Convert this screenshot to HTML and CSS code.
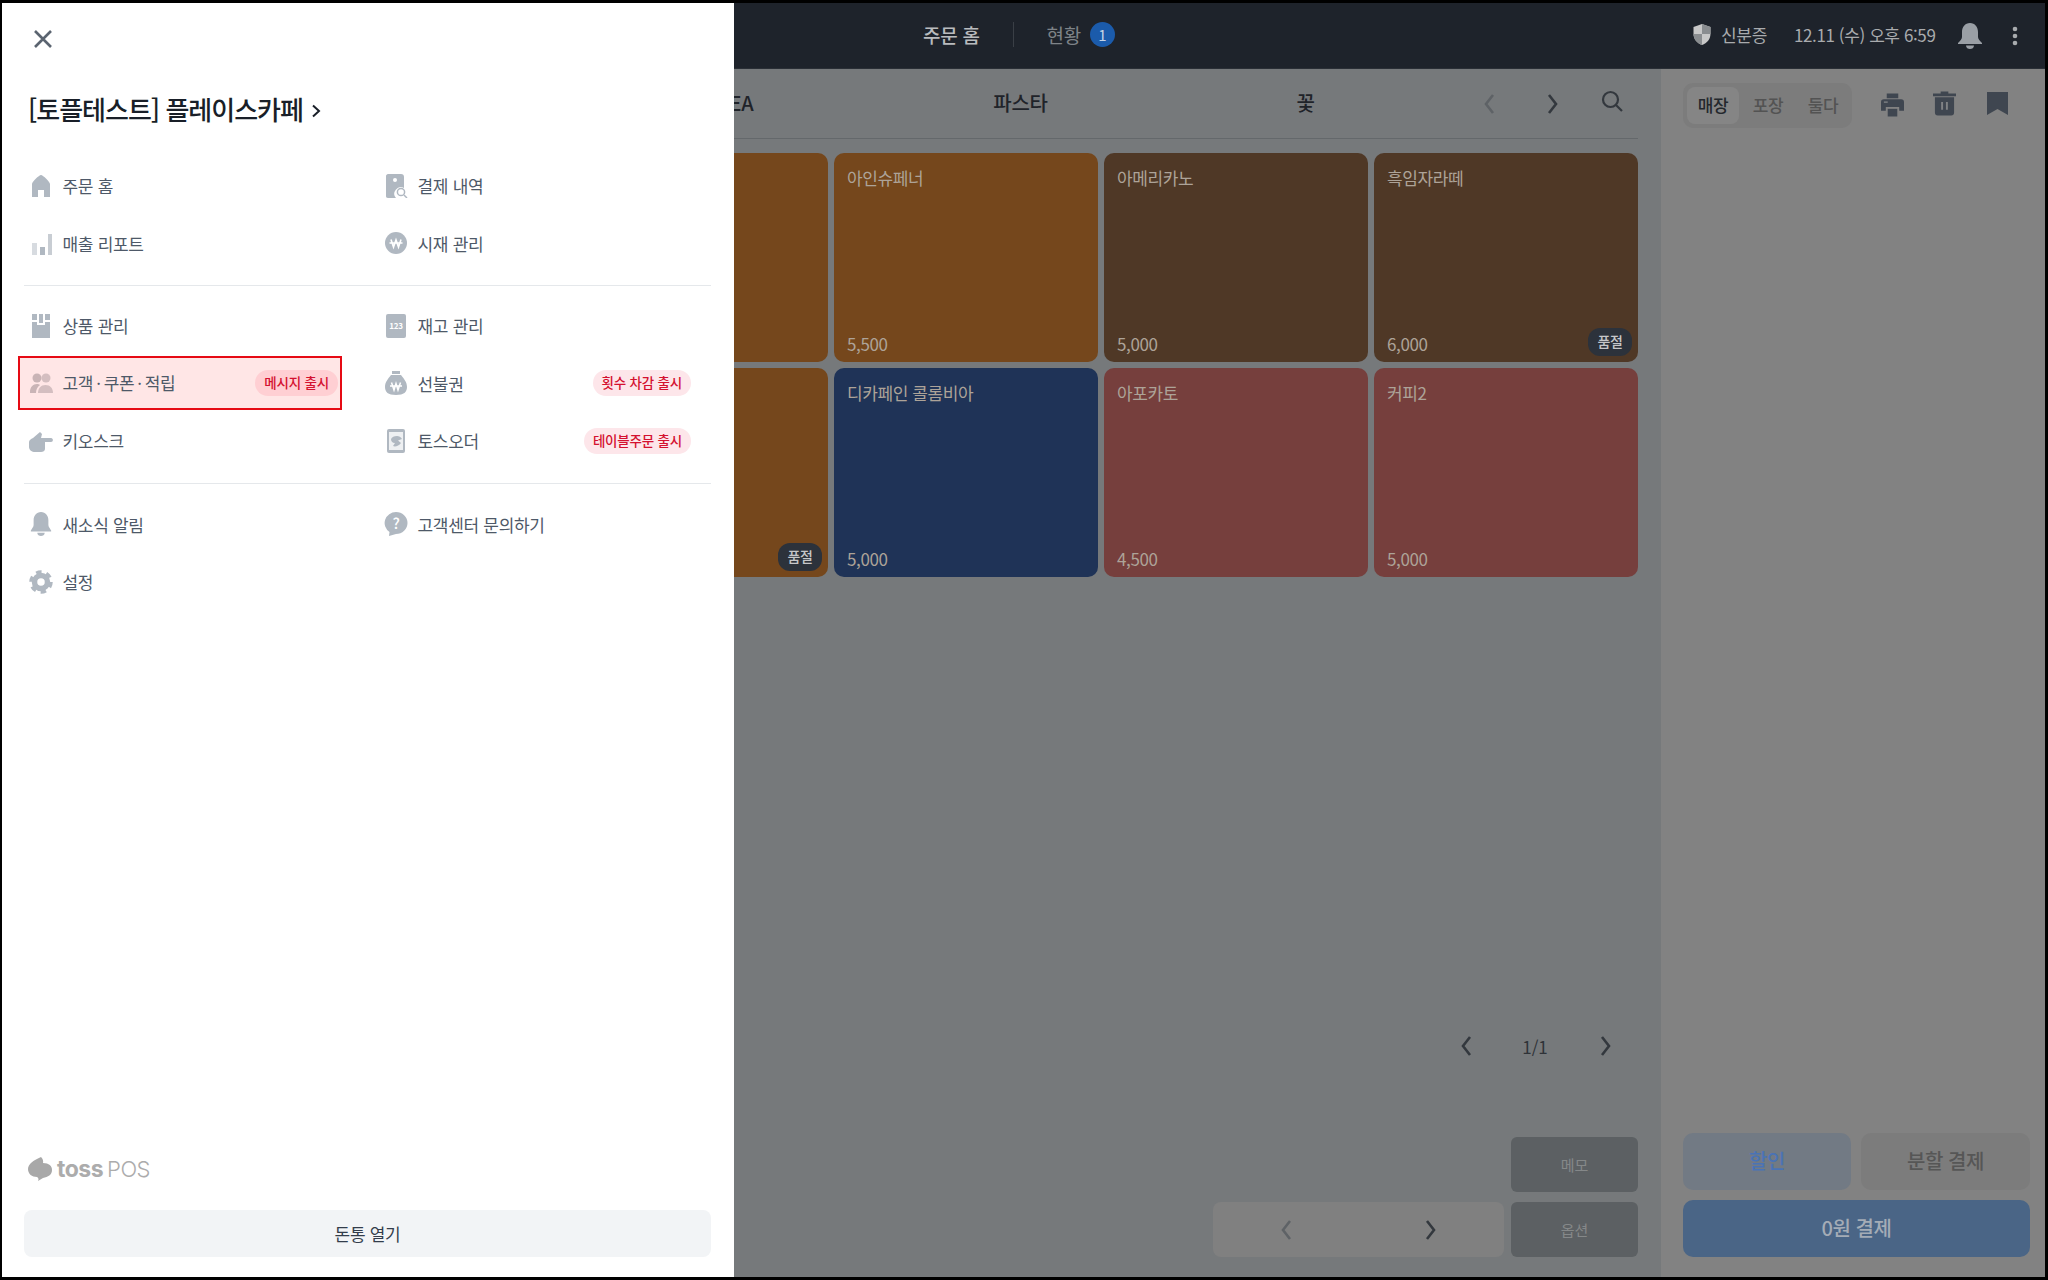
FILE: index.html
```html
<!DOCTYPE html>
<html lang="ko">
<head>
<meta charset="utf-8">
<title>토스 POS</title>
<link rel="stylesheet" href="styles.css">
</head>
<body>
<div class="app">
  <header class="topbar">
    <nav class="topnav">
      <span class="topnav-active">주문 홈</span>
      <span class="topnav-sep"></span>
      <span class="topnav-item">현황</span>
      <span class="count">1</span>
    </nav>
    <div class="status">
      <svg class="shield" viewBox="0 0 18 21"><path d="M9 0 17.5 3V10C17.500 15 14 19 9 21 4 19 .5 15 .5 10V3Z" fill="#c8c8c8"/><path d="M9 0 17.5 3V10H9ZM9 10H.5C.5 15 4 19 9 21Z" fill="#8a8d90"/></svg>
      <span class="status-text">신분증</span>
      <span class="clock">12.11 (수) 오후 6:59</span>
      <svg class="bell-top" viewBox="0 0 24 26"><path d="M12 0C7 0 4 4 4 9V14C4 16 2 18 0 20V21H24V20C22 18 20 16 20 14V9C20 4 17 0 12 0ZM8 22.500H16C16 25 14 26 12 26S8 25 8 22.500Z" fill="#9a9fa5"/></svg>
      <svg class="kebab" viewBox="0 0 6 20"><circle cx="3" cy="3" r="2.300" fill="#a8abae"/><circle cx="3" cy="10" r="2.300" fill="#a8abae"/><circle cx="3" cy="17" r="2.300" fill="#a8abae"/></svg>
    </div>
  </header>

  <div class="workspace">
    <main class="catalog">
      <div class="tabs">
        <div class="tab-list">
          <span class="tab">TEA</span>
          <span class="tab">파스타</span>
          <span class="tab">꽃</span>
        </div>
        <svg class="chev chev-off tab-prev" viewBox="0 0 12 20"><path d="M10 1 3 10 10 19"/></svg>
        <svg class="chev tab-next" viewBox="0 0 12 20"><path d="M2 1 9 10 2 19"/></svg>
        <svg class="search" viewBox="0 0 22 22"><circle cx="9.500" cy="9.500" r="7.500"/><path d="M15 15 21 21"/></svg>
      </div>

      <div class="cards">
        <div class="card c-orange"><span>아이스티</span><span>5,500</span></div>
        <div class="card c-orange"><span>아인슈페너</span><span>5,500</span></div>
        <div class="card c-brown"><span>아메리카노</span><span>5,000</span></div>
        <div class="card c-brown"><span>흑임자라떼</span><span>6,000</span><b class="sold">품절</b></div>
        <div class="card c-orange"><span>카페라떼</span><span>5,000</span><b class="sold">품절</b></div>
        <div class="card c-navy"><span>디카페인 콜롬비아</span><span>5,000</span></div>
        <div class="card c-red"><span>아포카토</span><span>4,500</span></div>
        <div class="card c-red"><span>커피2</span><span>5,000</span></div>
      </div>

      <div class="pager">
        <svg class="chev" viewBox="0 0 12 20"><path d="M10 1 3 10 10 19"/></svg>
        <span class="pager-text">1/1</span>
        <svg class="chev" viewBox="0 0 12 20"><path d="M2 1 9 10 2 19"/></svg>
      </div>

      <div class="actions">
        <button class="tool tool-memo">메모</button>
        <div class="stepper">
          <svg class="chev chev-off" viewBox="0 0 12 20"><path d="M10 1 3 10 10 19"/></svg>
          <svg class="chev" viewBox="0 0 12 20"><path d="M2 1 9 10 2 19"/></svg>
        </div>
        <button class="tool">옵션</button>
      </div>
    </main>

    <aside class="side">
      <div class="side-top">
        <div class="segment">
          <span class="seg seg-on">매장</span>
          <span class="seg">포장</span>
          <span class="seg">둘다</span>
        </div>
        <div class="side-icons">
          <svg class="printer" viewBox="0 0 24 24"><path d="M6 0H18V5H6ZM3 6H21C23 6 24 7 24 9V18H19V14H5V18H0V9C0 7 1 6 3 6Z" fill="#3f4650"/><path d="M7 16H17V24H7Z" fill="#3f4650"/><path d="M3 9H7" stroke="#7c7f83" stroke-width="1.500"/></svg>
          <svg class="trash" viewBox="0 0 24 26"><path d="M8 3V1H16V3H24V6H0V3ZM2 7H22V23C22 25 21 26 19 26H5C3 26 2 25 2 23Z" fill="#3f4650"/><path d="M9.500 12V20M14.500 12V20" stroke="#808285" stroke-width="2"/></svg>
          <svg class="mark" viewBox="0 0 21 23"><path d="M0 0H21V23L10.500 17 0 23Z" fill="#3f4650"/></svg>
        </div>
      </div>
      <div class="pay">
        <button class="pay-btn pay-discount">할인</button>
        <button class="pay-btn pay-split">분할 결제</button>
        <button class="pay-btn pay-main">0원 결제</button>
      </div>
    </aside>
  </div>

  <div class="drawer">
    <svg class="close" viewBox="0 0 20 20"><path d="M2 2 18 18M18 2 2 18"/></svg>
    <h1 class="store">[토플테스트] 플레이스카페
      <svg class="store-chev" viewBox="0 0 10 14"><path d="M2 1.500 8 7 2 12.500"/></svg>
    </h1>

    <section class="menu menu-first">
      <a class="item"><svg class="ico" viewBox="0 0 24 24"><path d="M12 1 C14 1 21 8 21 10V23H15V16H9V23H3V10C3 8 10 1 12 1Z"/></svg><span>주문 홈</span></a>
      <a class="item"><svg class="ico" viewBox="0 0 24 24"><path d="M4 0H17C19 0 20 1 20 3V14A6.500 6.500 0 0 0 12 24H4C2.500 24 2 23 2 22V2C2 1 3 0 4 0Z"/><circle cx="11" cy="6" r="2" fill="#fff"/><circle cx="17" cy="18" r="3.600" fill="none" stroke="#b0b8c1" stroke-width="1.500"/><path d="M20 21 23 24" stroke="#b0b8c1" stroke-width="1.500"/></svg><span>결제 내역</span></a>
      <a class="item"><svg class="ico" viewBox="0 0 24 24"><rect x="3" y="12" width="5" height="12" opacity=".5"/><rect x="11" y="16" width="5" height="8"/><rect x="19" y="3" width="4" height="21" opacity=".7"/></svg><span>매출 리포트</span></a>
      <a class="item"><svg class="ico" viewBox="0 0 24 24"><circle cx="12" cy="12" r="11"/><path d="M5.500 12H18.500M7 8.500 9.500 16 12 9 14.500 16 17 8.500" fill="none" stroke="#fff" stroke-width="1.600"/></svg><span>시재 관리</span></a>
    </section>

    <section class="menu">
      <a class="item"><svg class="ico" viewBox="0 0 24 24"><path d="M3 0H8V6H3ZM10 0H14V9H10ZM16 0H21V6H16ZM3 8H8V11H16V8H21V24H3Z"/></svg><span>상품 관리</span></a>
      <a class="item"><svg class="ico" viewBox="0 0 24 24"><rect x="2" y="0" width="20" height="24" rx="2"/><text class="ico-num" x="12" y="15" text-anchor="middle">123</text></svg><span>재고 관리</span></a>
      <a class="item item-hl"><svg class="ico ico-people" viewBox="0 0 24 24"><circle cx="8" cy="7" r="4.500"/><circle cx="17" cy="7" r="4.500" opacity=".8"/><path d="M1 21C1 16 4 13 8 13 9 13 10 13 11 14 8 16 7 19 7 22H2C1 22 1 22 1 21Z"/><path d="M9 22C9 17 12 14 16.500 14S24 17 24 22Z" opacity=".8"/></svg><span>고객<span class="dot">·</span>쿠폰<span class="dot">·</span>적립</span><span class="badge badge-hl">메시지 출시</span></a>
      <a class="item"><svg class="ico" viewBox="0 0 24 24"><path d="M8 0H16V3H8ZM7 4H17C20 8 23 11 23 16 23 21 20 24 12 24S1 21 1 16C1 11 4 8 7 4Z"/><path d="M6 15H18M7.500 11.500 10 19 12 12.500 14 19 16.500 11.500" fill="none" stroke="#fff" stroke-width="1.500"/></svg><span>선불권</span><span class="badge">횟수 차감 출시</span></a>
      <a class="item"><svg class="ico" viewBox="0 0 24 24"><path d="M0 13C0 11 2 10 4 9L11 3 13 5 12 9H22C24.500 9 24.500 13 22 13H16V20C16 22 14 23 12 23H6C3 23 0 21 0 18Z"/></svg><span>키오스크</span></a>
      <a class="item"><svg class="ico" viewBox="0 0 24 24"><rect x="3" y="0" width="18" height="24" rx="2"/><rect x="5" y="3" width="14" height="18" fill="#eef0f2"/><path d="M7 10C8 8 10 7 13 7 15 7 17 8 18 10L14 11.500 17 14C15 17 11 18 9 17L11 14C8 14 7 12 7 10Z"/></svg><span>토스오더</span><span class="badge">테이블주문 출시</span></a>
    </section>

    <section class="menu menu-last">
      <a class="item"><svg class="ico" viewBox="0 0 24 26"><path d="M12 0C7 0 4 4 4 9V14C4 16 2 18 1 20V21H23V20C22 18 20 16 20 14V9C20 4 17 0 12 0ZM8 22.500H16C16 25 14 26 12 26S8 25 8 22.500Z"/></svg><span>새소식 알림</span></a>
      <a class="item"><svg class="ico" viewBox="0 0 24 24"><path d="M12 0A11.500 11 0 0 1 12 22L5 24 5.500 20A11.500 11 0 0 1 12 0Z"/><text class="ico-q" x="12" y="17" text-anchor="middle">?</text></svg><span>고객센터 문의하기</span></a>
      <a class="item"><svg class="ico" viewBox="0 0 24 24"><circle class="gear-ring" cx="12" cy="12" r="6.500"/><circle class="gear-teeth" cx="12" cy="12" r="10"/></svg><span>설정</span></a>
    </section>

    <div class="drawer-foot">
      <div class="brand">
        <svg class="brand-mark" viewBox="0 0 24 24"><path d="M13 0C15 2 15.500 4 15 6 21 6 24 9 24 13 24 18 20 20 15 21L10 24C11 22 10.500 21 9 20 4 20 0 17 0 12 0 7 6 3 13 0Z"/></svg>
        <span class="brand-toss">toss</span>
        <span class="brand-pos">POS</span>
      </div>
      <button class="drawer-btn">돈통 열기</button>
    </div>
  </div>
</div>
</body>
</html>
```
FILE: styles.css
```css
* { box-sizing: border-box; }
html, body { margin: 0; height: 100%; }
body {
  background: #000;
  padding: 3px 3px 3px 2px;
  font-family: "Noto Sans CJK KR", "Noto Sans", sans-serif;
  overflow: hidden;
}
button { font: inherit; border: 0; padding: 0; }
.app {
  position: relative;
  width: 2043px;
  height: 1274px;
  display: flex;
  flex-direction: column;
  overflow: hidden;
}

/* top bar */
.topbar {
  height: 66px;
  flex: none;
  display: flex;
  align-items: center;
  background: #1e232b;
  padding-left: 921px;
  padding-right: 27px;
  border-bottom: 1px solid #2a2f36;
}
.topnav { display: flex; align-items: center; line-height: 26px; padding-bottom: 2px; }
.topnav-active { color: #b9bbbe; font-size: 19px; font-weight: 500; letter-spacing: -.3px; }
.topnav-sep { width: 1px; height: 25px; background: #3a3f46; margin: 0 33px; }
.topnav-item { color: #7e8388; font-size: 19px; letter-spacing: -.3px; }
.count {
  width: 25px; height: 25px; margin-left: 9px;
  border-radius: 50%;
  background: #1b5bab;
  color: #c4d3e6;
  font-size: 15px;
  line-height: 25px;
  text-align: center;
}
.status { margin-left: auto; display: flex; align-items: center; color: #a9abae; }
.shield { width: 18px; height: 21px; margin: 0 10px 2px 0; }
.status-text { font-size: 17px; letter-spacing: -.3px; width: 73px; margin-bottom: 2px; }
.clock { font-size: 17px; letter-spacing: -.4px; width: 164px; white-space: nowrap; margin-bottom: 2px; }
.bell-top { width: 24px; height: 26px; margin-right: 30px; }
.kebab { width: 6px; height: 20px; }

/* catalog */
.workspace { flex: 1; display: flex; min-height: 0; }
.catalog {
  width: 1659px;
  flex: none;
  background: #76797b;
  padding: 0 23px 20px 562px;
  display: flex;
  flex-direction: column;
}
.tabs {
  height: 70px;
  flex: none;
  display: flex;
  align-items: center;
  border-bottom: 1px solid #64686b;
}
.tab-list { display: grid; grid-template-columns: repeat(3, 285px); margin-left: 29px; padding-bottom: 2px; }
.tab { text-align: center; color: #1f2329; font-size: 20px; font-weight: 500; letter-spacing: -.3px; line-height: 26px; }
.chev { width: 12px; height: 20px; fill: none; stroke: #33383e; stroke-width: 2.600; flex: none; }
.chev-off { stroke: #5e6266; }
.tab-prev { margin-left: 35px; }
.tab-next { margin-left: 52px; }
.search { width: 22px; height: 22px; margin-left: 42px; margin-top: -6px; fill: none; stroke: #33383e; stroke-width: 2.200; flex: none; }

.cards {
  margin-top: 14px;
  display: grid;
  grid-template-columns: repeat(4, 264px);
  grid-auto-rows: 209px;
  gap: 6px;
}
.card {
  position: relative;
  border-radius: 10px;
  padding: 13px 13px 6px;
  display: flex;
  flex-direction: column;
  justify-content: space-between;
  color: #ada398;
  font-size: 17px;
  line-height: 24px;
  letter-spacing: -.4px;
}
.c-orange { background: #75471c; }
.c-brown { background: #4f3826; }
.c-navy { background: #1f3357; }
.c-red { background: #763f3d; }
.sold {
  position: absolute;
  right: 6px;
  bottom: 6px;
  width: 44px;
  height: 28px;
  border-radius: 12px;
  background: #2c323b;
  color: #c6c7c9;
  font-size: 14px;
  font-weight: 500;
  line-height: 26px;
  text-align: center;
}

.pager {
  margin: auto 26px 71px auto;
  width: 152px;
  height: 40px;
  flex: none;
  display: flex;
  align-items: center;
  justify-content: space-between;
}
.pager-text { color: #2f3338; font-size: 17px; margin-right: 2px; }

.actions {
  flex: none;
  display: grid;
  grid-template-columns: 291px 127px;
  grid-template-rows: 55px 55px;
  column-gap: 7px;
  row-gap: 10px;
  justify-content: end;
}
.tool {
  background: #5c6063;
  border-radius: 6px;
  color: #858889;
  font-size: 15px;
}
.tool-memo { grid-column: 2; }
.stepper {
  background: #808080;
  border-radius: 8px;
  display: flex;
  align-items: center;
  justify-content: space-between;
  padding: 0 67px;
}

/* side panel */
.side {
  flex: 1;
  background: #828282;
  padding: 14px 15px 20px 22px;
  display: flex;
  flex-direction: column;
  justify-content: space-between;
}
.side-top { display: flex; align-items: flex-start; }
.segment {
  width: 169px;
  height: 45px;
  padding: 4px;
  border-radius: 10px;
  background: #7c7c7c;
  display: flex;
  gap: 3px;
}
.seg {
  width: 52px;
  flex: none;
  height: 37px;
  color: #535353;
  font-size: 17px;
  font-weight: 500;
  line-height: 35px;
  letter-spacing: -.4px;
  text-align: center;
}
.seg-on { background: #858585; border-radius: 8px; color: #24282d; }
.side-icons { display: flex; align-items: flex-start; margin-left: 29px; }
.printer { width: 23px; height: 24px; margin-top: 10px; }
.trash { width: 23px; height: 26px; margin: 7px 0 0 29px; }
.mark { width: 21px; height: 23px; margin: 9px 0 0 31px; }
.pay {
  display: grid;
  grid-template-columns: 168px 169px;
  grid-template-rows: 57px 57px;
  column-gap: 10px;
  row-gap: 10px;
}
.pay-btn { border-radius: 10px; font-size: 20px; letter-spacing: -.4px; font-weight: 500; padding-bottom: 2px; }
.pay-discount { background: #727a84; color: #4a73b5; }
.pay-split { background: #7c7c7c; color: #565656; }
.pay-main { grid-column: 1 / 3; background: #4a6586; color: #a4acb6; }

/* drawer */
.drawer {
  position: absolute;
  left: 0;
  top: 0;
  bottom: 0;
  width: 732px;
  background: #fff;
  padding: 0 23px 0 22px;
  display: flex;
  flex-direction: column;
}
.close { display: block; width: 20px; height: 20px; margin: 26px 0 0 9px; fill: none; stroke: #5b6470; stroke-width: 2.600; flex: none; }
.store {
  margin: 42px 0 0 4px;
  height: 36px;
  flex: none;
  display: flex;
  align-items: center;
  color: #191f28;
  font-size: 26px;
  font-weight: 500;
  line-height: 36px;
  letter-spacing: -1px;
}
.store-chev { width: 10px; height: 14px; margin-left: 8px; margin-top: 3px; fill: none; stroke: #191f28; stroke-width: 2; }
.menu {
  flex: none;
  display: grid;
  grid-template-columns: 355px 1fr;
  grid-auto-rows: 57.500px;
  padding: 11px 0 13px;
  border-bottom: 1px solid #e5e8eb;
}
.menu-first { margin-top: 30px; padding-top: 0; }
.menu-last { border-bottom: 0; padding-top: 12px; }
.item {
  display: flex;
  align-items: center;
  padding-left: 4.500px;
  color: #4e5968;
  font-size: 17px;
  letter-spacing: -.3px;
  white-space: nowrap;
}
.dot { margin: 0 3px; }
.ico { width: 24px; height: 24px; margin-right: 10px; flex: none; fill: #b0b8c1; }
.ico-people { fill: #c9b4b6; }
.item-hl {
  position: relative;
  width: 324px;
  height: 54px;
  margin: 1px 0 0 -6px;
  padding-left: 8.500px;
  padding-right: 2px;
  background: #ffe6e6;
  border: 2px solid #e60a14;
}
.ico-num { font-size: 8px; font-weight: 700; fill: #fff; }
.ico-q { font-size: 15px; font-weight: 500; fill: #fff; }
.gear-ring { fill: none; stroke: #b0b8c1; stroke-width: 5.500; }
.gear-teeth { fill: none; stroke: #b0b8c1; stroke-width: 3.500; stroke-dasharray: 5.500 4.970; }
.badge {
  margin-left: auto;
  margin-right: 20px;
  height: 26px;
  padding: 0 9px;
  border-radius: 13px;
  background: #fde6ea;
  color: #d4112f;
  font-size: 13.500px;
  font-weight: 500;
  line-height: 25px;
  letter-spacing: -.2px;
}
.badge-hl { margin-right: 0; background: #ffcfd3; }
.drawer-foot { margin-top: auto; padding-bottom: 20px; }
.brand { display: flex; align-items: center; height: 24px; margin: 0 0 29px 4px; color: #acacac; }
.brand-mark { width: 24px; height: 24px; fill: #a8a8a8; margin-right: 5px; }
.brand-toss { font-family: "Inter", sans-serif; font-weight: 700; font-size: 23px; letter-spacing: -.5px; line-height: 24px; margin-right: 4px; }
.brand-pos { font-family: "Inter", sans-serif; font-weight: 300; font-size: 22px; letter-spacing: -.5px; line-height: 24px; }
.drawer-btn {
  display: block;
  width: 100%;
  height: 47px;
  border-radius: 8px;
  background: #f2f4f6;
  color: #333d4b;
  font-size: 17px;
  letter-spacing: -.3px;
}
```
